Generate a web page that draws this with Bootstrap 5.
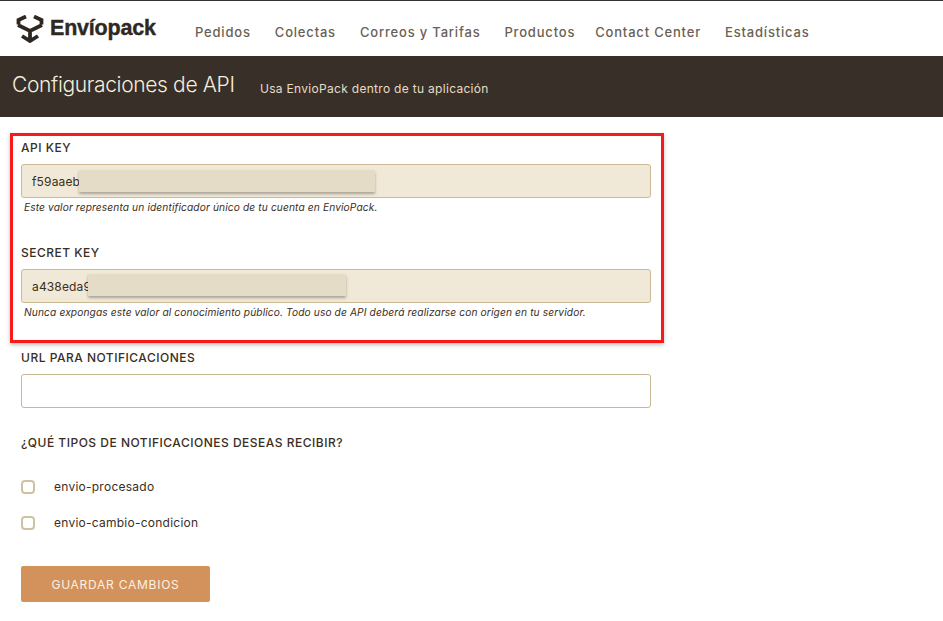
<!DOCTYPE html>
<html lang="es">
<head>
<meta charset="utf-8">
<title>Configuraciones de API</title>
<link href="https://cdn.jsdelivr.net/npm/bootstrap@5.3.0/dist/css/bootstrap.min.css" rel="stylesheet">
<style>
html,body{height:621px;overflow:hidden}
body{font-family:Inter,"Noto Sans",sans-serif;color:#3a2e22;background:#fff;border-top:1px solid #333}
.topbar{height:55px;padding:0 0 0 16px}
.brandmark{width:28px;height:28px;margin-right:6px;margin-top:0}
.brandname{font-family:"Liberation Sans",sans-serif;font-weight:700;font-size:21.5px;letter-spacing:-.2px;color:#2f2822;-webkit-text-stroke:.4px #2f2822;margin-top:-1px;width:105px}
.menu{margin-left:40px;gap:24px;padding-top:9px}
.menu a{color:#6a5f55;font-size:13px;font-weight:500;letter-spacing:.81px;text-decoration:none;white-space:nowrap}
.menu a.tight{margin-left:-4px}
.pagehead{height:61px;background:#392f29;padding-left:12px;padding-bottom:4px}
.pagehead h1{font-size:21px;font-weight:300;color:#f4eedd;letter-spacing:-.35px;margin:0;width:248px}
.pagehead span{font-size:12px;color:#e6dcc6;letter-spacing:.3px;font-weight:400;margin-top:8px}
.redframe{margin:16px 0 0 10px;width:654px;height:210px;border:3px solid #f61a1a;box-shadow:0 2px 4px rgba(0,0,0,.25);padding:4px 10px 0 8px}
.fieldname{display:block;font-size:12px;font-weight:500;letter-spacing:.5px;color:#3a2e22;line-height:16px;margin-bottom:8px}
.field{position:relative;width:630px;height:34px;border:1px solid #c9b994;border-radius:3px;background:#f1e9d8;font-size:12px;color:#3a2e22;padding:0 10px;letter-spacing:.15px;box-shadow:none}
.field:focus{background:#f1e9d8;border-color:#c9b994;box-shadow:none}
.plainfield{background:#fff}
.plainfield:focus{background:#fff}
.maskwrap{position:relative;width:630px}
.maskbar{position:absolute;height:22px;background:#e5dcc8;box-shadow:0 2px 3px rgba(0,0,0,.3);border-radius:1px}
.maskone{left:58px;top:6px;width:296px}
.masktwo{left:67px;top:5px;width:258px}
.hint{font-size:10.2px;font-style:italic;color:#3a2e22;letter-spacing:.12px;margin:3px 0 0 3px;line-height:13px;white-space:nowrap}
.gapone{height:31px}
.below{padding:7px 0 0 21px}
.question{font-size:12px;font-weight:500;letter-spacing:.5px;line-height:16px;margin:27px 0 26px}
.tick{width:14px;height:14px;border:2px solid #cfc2a3;border-radius:3px;margin:0 19px 0 0;background:#fff;box-shadow:none}
.ticklabel{font-size:12px;letter-spacing:.25px;color:#3a2e22}
.tickrow{height:20px;margin-bottom:16px}
.savebtn{width:189px;height:36px;margin-top:17px;background:#d3925c;border:0;border-radius:2px;color:#fbf1e3;font-size:12px;font-weight:400;letter-spacing:.75px;padding:1px 0 0}
</style>
</head>
<body>
<nav class="topbar d-flex align-items-center">
  <svg class="brandmark" viewBox="0 0 28 28" aria-label="Enviopack">
    <path fill="none" stroke="#2f2822" stroke-width="3.8" d="M2.5 9.5V5L10 1.5M25.5 9.5V5L18 1.5M2 10 14 16 26 10M14 16V26M6 21 14 26 22 21"/>
  </svg>
  <span class="brandname">Envíopack</span>
  <div class="menu d-flex align-items-center">
    <a href="#">Pedidos</a><a href="#">Colectas</a><a href="#">Correos y Tarifas</a><a href="#">Productos</a><a href="#" class="tight">Contact Center</a><a href="#">Estadísticas</a>
  </div>
</nav>
<header class="pagehead d-flex align-items-center">
  <h1>Configuraciones de API</h1><span>Usa EnvioPack dentro de tu aplicación</span>
</header>
<main>
  <form>
    <section class="redframe">
      <label class="fieldname" for="k1">API KEY</label>
      <div class="maskwrap">
        <input id="k1" class="form-control field" value="f59aaeb" readonly>
        <div class="maskbar maskone"></div>
      </div>
      <p class="hint">Este valor representa un identificador único de tu cuenta en EnvioPack.</p>
      <div class="gapone"></div>
      <label class="fieldname" for="k2">SECRET KEY</label>
      <div class="maskwrap">
        <input id="k2" class="form-control field" value="a438eda9" readonly>
        <div class="maskbar masktwo"></div>
      </div>
      <p class="hint">Nunca expongas este valor al conocimiento público. Todo uso de API deberá realizarse con origen en tu servidor.</p>
    </section>
    <section class="below">
      <label class="fieldname" for="k3">URL PARA NOTIFICACIONES</label>
      <input id="k3" class="form-control field plainfield">
      <p class="question">¿QUÉ TIPOS DE NOTIFICACIONES DESEAS RECIBIR?</p>
      <div class="tickrow d-flex align-items-center">
        <input class="form-check-input tick" type="checkbox" id="c1"><label class="ticklabel" for="c1">envio-procesado</label>
      </div>
      <div class="tickrow d-flex align-items-center">
        <input class="form-check-input tick" type="checkbox" id="c2"><label class="ticklabel" for="c2">envio-cambio-condicion</label>
      </div>
      <button type="button" class="btn savebtn">GUARDAR CAMBIOS</button>
    </section>
  </form>
</main>
<script src="https://cdn.jsdelivr.net/npm/bootstrap@5.3.0/dist/js/bootstrap.bundle.min.js"></script>
</body>
</html>
